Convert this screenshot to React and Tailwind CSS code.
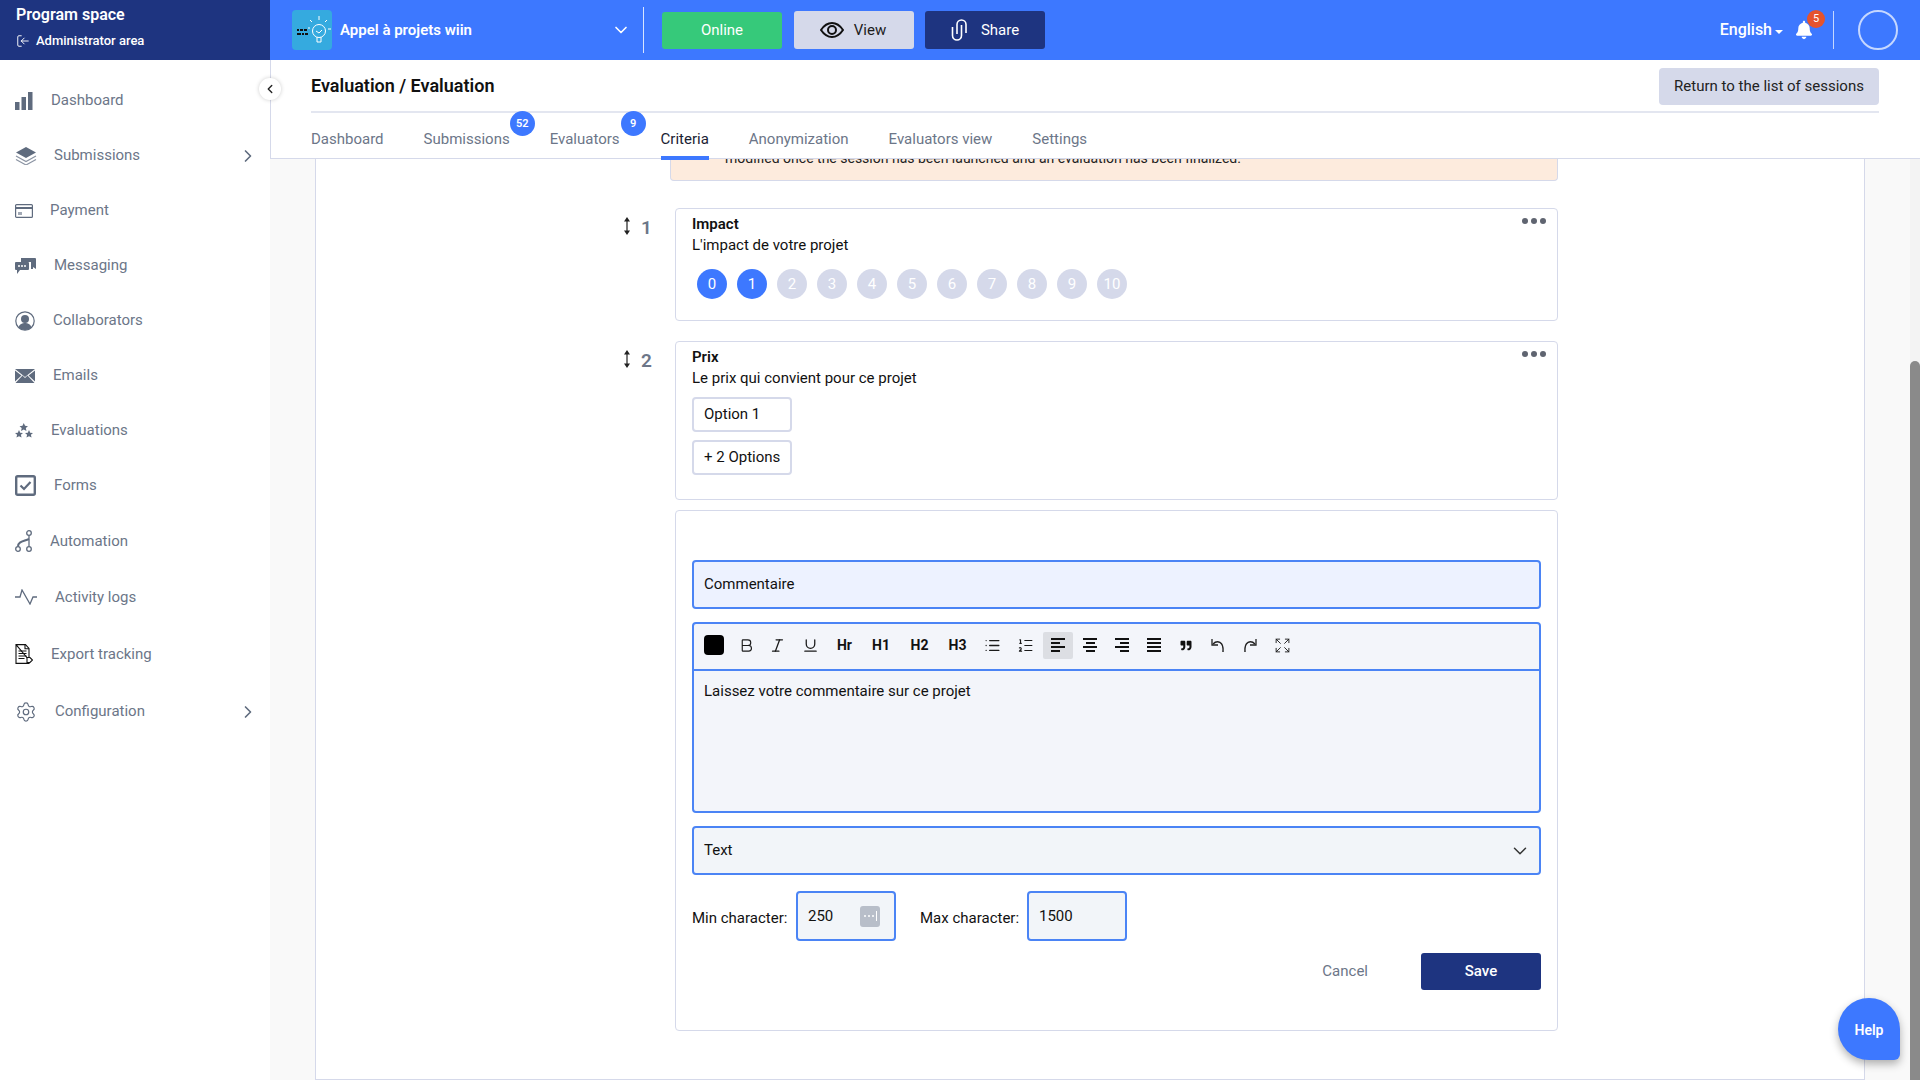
import React from 'react';
import {
  Bold, ChevronDown, ChevronLeft, ChevronRight, Expand, Italic, List, ListOrdered,
  LogIn, Settings, Underline,
} from 'lucide-react';
import { FaBell, FaQuoteRight } from 'react-icons/fa';

function DashIcon() {
  return (
    <svg width="18" height="18" viewBox="0 0 18 18" fill="#5f6b7e">
      <rect x="0" y="10" width="4.5" height="8" />
      <rect x="6.5" y="5" width="4.5" height="13" />
      <rect x="13" y="0" width="4.5" height="18" />
    </svg>
  );
}
function LayersIcon() {
  return (
    <svg width="22" height="18" viewBox="0 0 22 18" fill="none">
      <path d="M11 0 21 5.5 11 11 1 5.5Z" fill="#5f6b7e" />
      <path d="M1 9l10 5.5L21 9M1 12.5 11 18l10-5.5" stroke="#8b94a3" strokeWidth="1.2" />
    </svg>
  );
}
function CardIcon() {
  return (
    <svg width="18" height="14" viewBox="0 0 18 14" fill="none">
      <rect x="0.6" y="0.6" width="16.8" height="12.8" rx="1" stroke="#5f6b7e" strokeWidth="1.2" />
      <rect x="1" y="3" width="16" height="2" fill="#5f6b7e" />
      <rect x="3" y="8" width="4" height="3" fill="#a2a9b5" />
    </svg>
  );
}
function ChatIcon() {
  return (
    <svg width="21" height="16" viewBox="0 0 21 16" fill="#5f6b7e">
      <path d="M6 0h14a1 1 0 0 1 1 1v10l-3-2V11H16V4H6Z" />
      <path d="M1 4h12a1 1 0 0 1 1 1v6a1 1 0 0 1-1 1H5l-3 4v-4H1a1 1 0 0 1-1-1V5a1 1 0 0 1 1-1Z" />
      <circle cx="4" cy="8" r="1" fill="#fff" />
      <circle cx="7" cy="8" r="1" fill="#fff" />
      <circle cx="10" cy="8" r="1" fill="#fff" />
    </svg>
  );
}
function PersonIcon() {
  return (
    <svg width="20" height="20" viewBox="0 0 20 20" fill="none">
      <circle cx="10" cy="10" r="9.2" stroke="#5f6b7e" strokeWidth="1.2" />
      <circle cx="10" cy="8" r="4" fill="#5f6b7e" />
      <path d="M3.5 16.5c1-3.5 4-4.5 6.500-4.500s5.500 1 6.500 4.500A9 9 0 0 1 10 19a9 9 0 0 1-6.500-2.500Z" fill="#5f6b7e" />
    </svg>
  );
}
function MailIcon() {
  return (
    <svg width="20" height="14" viewBox="0 0 20 14" fill="#5f6b7e">
      <path d="M0 0h20L10 8Z" />
      <path d="M0 1.500v11l6.500-6ZM20 1.500v11l-6.500-6Z" />
      <path d="M7.500 6.500 10 9l2.500-2.500L19.500 14H.5Z" />
    </svg>
  );
}
function StarsIcon() {
  const star = 'M5 0l1.500 3.300 3.500.4-2.600 2.300.8 3.500L5 7.700 1.800 9.500l.8-3.500L0 3.700l3.500-.4Z';
  return (
    <svg width="18" height="15" viewBox="0 0 18 15" fill="#5f6b7e">
      <path d={star} transform="translate(4.500 0) scale(.85)" />
      <path d={star} transform="translate(0 7) scale(.8)" />
      <path d={star} transform="translate(10 7) scale(.8)" />
    </svg>
  );
}
function CheckBoxIcon() {
  return (
    <svg width="21" height="21" viewBox="0 0 21 21" fill="none">
      <rect x="1.200" y="1.200" width="18.600" height="18.600" rx="1.500" stroke="#5f6b7e" strokeWidth="2.400" />
      <path d="M5.500 10.500l3.500 3.500 6.500-7" stroke="#5f6b7e" strokeWidth="2.200" />
    </svg>
  );
}
function FlowIcon() {
  return (
    <svg width="18" height="22" viewBox="0 0 18 22" fill="none" stroke="#5f6b7e" strokeWidth="1.300">
      <circle cx="14" cy="3" r="2.300" />
      <circle cx="3" cy="19" r="2.300" />
      <circle cx="14" cy="19" r="2.300" />
      <path d="M14 5.500v11" />
      <path d="M3 16.500c0-5 5-5 11-7.500" strokeWidth="2" />
    </svg>
  );
}
function PulseIcon() {
  return (
    <svg width="22" height="16" viewBox="0 0 22 16" fill="none" stroke="#5f6b7e" strokeWidth="1.300">
      <path d="M0 8h5l2-7 8 14 3-7h4" />
    </svg>
  );
}
function ExportIcon() {
  return (
    <svg width="18" height="20" viewBox="0 0 18 20" fill="none" stroke="#111" strokeWidth="1.100">
      <path d="M1 .6h9.500L14 4.500V13M14 16v3.400H1V.6Z" />
      <path d="M3.500 7h8M3.500 9.500h8M3.500 12h8M3.500 14.500h6" />
      <path d="M10 .8v4h4" />
      <path d="M12 13.500h3l2.500 2.500-2.500 2.500h-3Z" fill="#fff" />
    </svg>
  );
}
function UndoIcon({ flip }) {
  return (
    <svg className={flip ? '-scale-x-100' : ''} width="14" height="16" viewBox="0 0 14 16" fill="none" stroke="#222" strokeWidth="1.500">
      <path d="M2 7c4-4 11-3 10 8" />
      <path d="M1 2v6h6" strokeWidth="1.300" />
    </svg>
  );
}

const menu = [
  { label: 'Dashboard', icon: <DashIcon />, row: 'h-[55px]', slot: 'w-[36px]' },
  { label: 'Submissions', icon: <LayersIcon />, row: 'h-[55px]', slot: 'w-[39px]', more: true },
  { label: 'Payment', icon: <CardIcon />, row: 'h-[55px]', slot: 'w-[35px]' },
  { label: 'Messaging', icon: <ChatIcon />, row: 'h-[55px]', slot: 'w-[39px]' },
  { label: 'Collaborators', icon: <PersonIcon />, row: 'h-[55px]', slot: 'w-[38px]' },
  { label: 'Emails', icon: <MailIcon />, row: 'h-[55px]', slot: 'w-[38px]' },
  { label: 'Evaluations', icon: <StarsIcon />, row: 'h-[55px]', slot: 'w-[36px]' },
  { label: 'Forms', icon: <CheckBoxIcon />, row: 'h-[55px]', slot: 'w-[39px]' },
  { label: 'Automation', icon: <FlowIcon />, row: 'h-[56px]', slot: 'w-[35px]' },
  { label: 'Activity logs', icon: <PulseIcon />, row: 'h-[56px]', slot: 'w-[40px]' },
  { label: 'Export tracking', icon: <ExportIcon />, row: 'h-[58px]', slot: 'w-[36px]' },
  { label: 'Configuration', icon: <Settings className="h-[22px] w-[22px] text-[#5f6b7e]" strokeWidth={1.3} />, row: 'h-[57px]', slot: 'w-[40px]', more: true },
];

const tabs = [
  { label: 'Dashboard' },
  { label: 'Submissions', badge: '52' },
  { label: 'Evaluators', badge: '9', extra: 'pr-[1px]' },
  { label: 'Criteria', active: true },
  { label: 'Anonymization' },
  { label: 'Evaluators view' },
  { label: 'Settings' },
];

function Sidebar() {
  return (
    <aside className="w-[270px] shrink-0 bg-white pt-[13px]">
      {menu.map((m) => (
        <div key={m.label} className={`flex items-center pl-[15px] pr-[12px] text-[15px] text-[#6c7688] ${m.row}`}>
          <div className={`flex shrink-0 items-center ${m.slot}`}>{m.icon}</div>
          <span className="flex-1">{m.label}</span>
          {m.more && <ChevronRight className="h-[20px] w-[20px] text-[#5f6b7e]" strokeWidth={2} />}
        </div>
      ))}
    </aside>
  );
}

function Logo() {
  return (
    <div className="flex h-[40px] w-[40px] shrink-0 items-center justify-center rounded-[4px] bg-[#35aadf]">
      <svg width="38" height="32" viewBox="0 0 38 32" fill="none">
        <path d="M4 16h2M7 16h3M11 16h3M4 20h4M9 20h2M12 20h3" stroke="#111" strokeWidth="2" />
        <circle cx="26" cy="17" r="6.500" stroke="#fff" strokeWidth="1" />
        <path d="M24 23v5h4v-5M23 17l3 2 3-3M26 2v4M34 6l-2 2M38 15h-3M17 6l2 2M15 14h2" stroke="#fff" strokeWidth="1" />
      </svg>
    </div>
  );
}

function Header() {
  return (
    <header className="flex h-[60px] shrink-0 bg-[#3d78ff] text-white">
      <div className="w-[270px] shrink-0 bg-[#1e3480] pl-[16px] pt-[6px]">
        <div className="text-[16px] font-semibold leading-[18px]">Program space</div>
        <div className="mt-[8px] flex items-center gap-[6px] text-[13px] font-medium leading-[17px]">
          <LogIn className="h-[14px] w-[14px] rotate-180" strokeWidth={1.6} />
          Administrator area
        </div>
      </div>
      <div className="flex flex-1 items-center pl-[22px] pr-[22px]">
        <Logo />
        <span className="ml-[8px] w-[271px] text-[15px] font-semibold">Appel à projets wiin</span>
        <ChevronDown className="h-[20px] w-[20px]" strokeWidth={2} />
        <div className="ml-[12px] h-[46px] w-px bg-white/80" />
        <button className="ml-[18px] h-[37px] w-[120px] rounded-[3px] bg-[#36c97a] text-[15px]">Online</button>
        <button className="ml-[12px] flex h-[38px] w-[120px] items-center justify-center gap-[10px] rounded-[3px] bg-[#d5d9ea] pr-[2px] text-[15px] text-[#1c1c1c]">
          <svg width="24" height="16" viewBox="0 0 24 16" fill="none" stroke="#111" strokeWidth="2">
            <path d="M1 8c3-4.500 7-7 11-7s8 2.500 11 7c-3 4.500-7 7-11 7S4 12.500 1 8Z" />
            <circle cx="12" cy="8" r="4" />
          </svg>
          View
        </button>
        <button className="ml-[11px] flex h-[38px] w-[120px] items-center justify-center gap-[12px] rounded-[3px] bg-[#1e3480] text-[15px]">
          <svg width="18" height="22" viewBox="0 0 18 22" fill="none" stroke="#fff" strokeWidth="1.600">
            <path d="M1.500 8v8.500a4.500 4.500 0 0 0 9 0V6" />
            <path d="M6 15V5.500a4.500 4.500 0 0 1 9 0V14" />
          </svg>
          Share
        </button>
        <div className="ml-auto flex items-center text-[16px] font-medium">
          English
          <span className="ml-[3px] mt-[3px] h-0 w-0 border-x-[4px] border-t-[4px] border-x-transparent border-t-white" />
          <div className="relative ml-[13px] flex h-[24px] w-[16px] items-center justify-center">
            <FaBell className="h-[20px] w-[16px]" />
            <span className="absolute -right-[13px] -top-[8px] flex h-[18px] w-[18px] items-center justify-center rounded-full bg-[#e5532d] text-[11px] font-normal">5</span>
          </div>
          <div className="ml-[21px] h-[38px] w-px bg-white/70" />
          <div className="ml-[24px] h-[40px] w-[40px] rounded-full border-2 border-white/70" />
        </div>
      </div>
    </header>
  );
}

function SubHeader() {
  return (
    <div className="relative z-10 h-[99px] shrink-0 border-b border-l border-[#d5d9ea] bg-white pl-[40px] pr-[41px]">
      <div className="flex h-[53px] items-center justify-between border-b-2 border-[#e3e6f0]">
        <h1 className="text-[18px] font-semibold text-[#111]">Evaluation / Evaluation</h1>
        <button className="mt-[1px] h-[37px] w-[220px] rounded-[4px] bg-[#d5d9ea] text-[15px] text-[#222]">Return to the list of sessions</button>
      </div>
      <nav className="flex gap-[40px] pt-[14px] text-[15px] text-[#6c7688]">
        {tabs.map((t) => (
          <div key={t.label} className={`relative h-[33px] leading-[24px] ${t.extra || ''} ${t.active ? 'border-b-4 border-[#3d78ff] text-[#1a2233]' : ''}`}>
            {t.label}
            {t.badge && (
              <span className="absolute -right-[25px] -top-[16px] flex h-[25px] w-[25px] items-center justify-center rounded-full bg-[#3d78ff] text-[11px] font-semibold text-white">
                {t.badge}
              </span>
            )}
          </div>
        ))}
      </nav>
    </div>
  );
}

function DragNumber({ n }) {
  return (
    <div className="flex w-[54px] shrink-0 items-start pl-[1px]">
      <svg className="mt-[9px]" width="10" height="18" viewBox="0 0 10 18" fill="#222">
        <path d="M5 0l3 4.500H5.600v9H8L5 18l-3-4.500h2.400v-9H2Z" />
      </svg>
      <span className="ml-[9px] mt-[8px] text-[19px] font-semibold leading-[24px] text-[#6c7688]">{n}</span>
    </div>
  );
}

// alignment icon in the toolbar
function Lines({ align, active, full }) {
  const short = full ? 'w-[14px]' : 'w-[9px]';
  return (
    <span className={`flex h-[27px] w-[30px] flex-col justify-center gap-[2px] rounded-[2px] ${align} ${active ? 'bg-[#dcdee3]' : ''}`}>
      <span className="h-[2px] w-[14px] bg-[#111]" />
      <span className={`h-[2px] bg-[#111] ${short}`} />
      <span className="h-[2px] w-[14px] bg-[#111]" />
      <span className={`h-[2px] bg-[#111] ${short}`} />
    </span>
  );
}

function Editor() {
  const cell = 'flex h-[27px] shrink-0 items-center justify-center';
  const txt = 'text-[14px] font-bold text-[#111]';
  const ic = 'h-[17px] w-[17px] text-[#1a1a1a]';
  return (
    <div className="mt-[13px] h-[191px] rounded-[4px] border-2 border-[#4b84f5] bg-[#f3f5fa]">
      <div className="flex h-[47px] items-center border-b-2 border-[#4b84f5] pb-[3px] pl-[10px]">
        <span className="h-[20px] w-[20px] shrink-0 rounded-[4px] bg-black" />
        <div className={`${cell} ml-[7px] w-[30px]`}><Bold className={ic} strokeWidth={1.6} /></div>
        <div className={`${cell} w-[32px]`}><Italic className={ic} strokeWidth={1.8} /></div>
        <div className={`${cell} w-[34px]`}><Underline className={ic} strokeWidth={1.8} /></div>
        <div className={`${cell} w-[35px] ${txt}`}>Hr</div>
        <div className={`${cell} w-[38px] ${txt}`}>H1</div>
        <div className={`${cell} w-[39px] ${txt}`}>H2</div>
        <div className={`${cell} w-[37px] ${txt}`}>H3</div>
        <div className={`${cell} w-[33px]`}><List className={ic} strokeWidth={1.8} /></div>
        <div className={`${cell} w-[32px]`}><ListOrdered className={ic} strokeWidth={1.6} /></div>
        <div className={`${cell} ml-[1px] w-[32px]`}><Lines align="items-start pl-[8px]" active /></div>
        <div className={`${cell} w-[32px]`}><Lines align="items-center" /></div>
        <div className={`${cell} w-[32px]`}><Lines align="items-end pr-[8px]" /></div>
        <div className={`${cell} w-[32px]`}><Lines align="items-center" full /></div>
        <div className={`${cell} w-[32px]`}><FaQuoteRight className="h-[11px] w-[12px] text-[#111]" /></div>
        <div className={`${cell} w-[32px]`}><UndoIcon /></div>
        <div className={`${cell} w-[32px]`}><UndoIcon flip /></div>
        <div className={`${cell} w-[32px]`}><Expand className={ic} strokeWidth={1.3} /></div>
      </div>
      <div className="px-[10px] pt-[10px] text-[15px] leading-[20px] text-[#111]">Laissez votre commentaire sur ce projet</div>
    </div>
  );
}

function CriteriaForm() {
  return (
    <div className="ml-[54px] mt-[10px] h-[521px] rounded-[4px] border border-[#d5d9ea] px-[16px] pt-[49px] text-[#111]">
      <div className="flex h-[49px] items-center rounded-[4px] border-2 border-[#4b84f5] bg-[#edf2ff] px-[10px] text-[15px]">Commentaire</div>
      <Editor />
      <div className="mt-[13px] flex h-[49px] items-center justify-between rounded-[4px] border-2 border-[#4b84f5] bg-[#f2f5f9] pl-[10px] pr-[8px] text-[15px]">
        Text
        <ChevronDown className="h-[22px] w-[22px] text-[#333]" strokeWidth={1.6} />
      </div>
      <div className="mt-[16px] flex items-center text-[15px]">
        <span className="mt-[4px] w-[104px]">Min character:</span>
        <div className="flex h-[50px] w-[100px] items-center justify-between rounded-[4px] border-2 border-[#4b84f5] bg-[#f2f5f9] pl-[10px] pr-[14px]">
          250
          <span className="flex h-[21px] w-[20px] items-center justify-center gap-[2px] rounded-[3px] bg-[#b8bec9]">
            <i className="h-[2px] w-[2px] rounded-full bg-white" />
            <i className="h-[2px] w-[2px] rounded-full bg-white" />
            <i className="h-[2px] w-[2px] rounded-full bg-white" />
            <i className="h-[10px] w-px bg-white" />
          </span>
        </div>
        <span className="ml-[24px] mt-[4px] w-[107px]">Max character:</span>
        <div className="flex h-[50px] w-[100px] items-center rounded-[4px] border-2 border-[#4b84f5] bg-[#f2f5f9] pl-[10px]">1500</div>
      </div>
      <div className="mt-[12px] flex items-center justify-end">
        <button className="mr-[53px] text-[15px] text-[#6c7688]">Cancel</button>
        <button className="h-[37px] w-[120px] rounded-[3px] bg-[#1e3480] text-[15px] font-medium text-white">Save</button>
      </div>
    </div>
  );
}

function Dots() {
  return (
    <div className="absolute right-[11px] top-[9px] flex gap-[3px]">
      <i className="h-[6px] w-[6px] rounded-full bg-[#5f6470]" />
      <i className="h-[6px] w-[6px] rounded-full bg-[#5f6470]" />
      <i className="h-[6px] w-[6px] rounded-full bg-[#5f6470]" />
    </div>
  );
}

function Content() {
  return (
    <div className="relative flex min-h-0 flex-1 overflow-hidden bg-[#f9f9f9] pl-[45px]">
      <div className="w-[1550px] shrink-0 overflow-hidden border-x border-b border-[#d5d9ea] bg-white">
        <div className="ml-[305px] w-[937px] text-[15px]">
          <div className="ml-[49px] h-[22px] overflow-hidden rounded-b-[4px] border border-t-0 border-[#d5d9ea] bg-[#fdebdd] pl-[54px] text-[14px] leading-[20px] text-[#222]">
            <div className="-mt-[11px]">modified once the session has been launched and an evaluation has been finalized.</div>
          </div>
          <div className="mt-[27px] flex">
            <DragNumber n="1" />
            <div className="relative h-[113px] flex-1 rounded-[4px] border border-[#d5d9ea] px-[16px] pt-[5px] text-[#111]">
              <div className="font-semibold leading-[20px]">Impact</div>
              <div className="mt-[1px] leading-[21px]">L'impact de votre projet</div>
              <div className="mt-[13px] flex gap-[10px] pl-[5px]">
                {[0, 1, 2, 3, 4, 5, 6, 7, 8, 9, 10].map((n) => (
                  <span key={n} className={`flex h-[30px] w-[30px] items-center justify-center rounded-full text-[15px] text-white ${n < 2 ? 'bg-[#3d78ff]' : 'bg-[#d5d9ea]'}`}>{n}</span>
                ))}
              </div>
              <Dots />
            </div>
          </div>
          <div className="mt-[20px] flex">
            <DragNumber n="2" />
            <div className="relative h-[159px] flex-1 rounded-[4px] border border-[#d5d9ea] px-[16px] pt-[5px] text-[#111]">
              <div className="font-semibold leading-[20px]">Prix</div>
              <div className="mt-[1px] leading-[21px]">Le prix qui convient pour ce projet</div>
              <div className="mt-[8px] flex h-[35px] w-[100px] items-center rounded-[4px] border-2 border-[#d5d9ea] pl-[10px]">Option 1</div>
              <div className="mt-[8px] flex h-[35px] w-[100px] items-center rounded-[4px] border-2 border-[#d5d9ea] pl-[10px]">+ 2 Options</div>
              <Dots />
            </div>
          </div>
          <CriteriaForm />
        </div>
      </div>
      <div className="ml-[45px] w-[10px] shrink-0 bg-[#f3f3f3] pt-[202px]">
        <div className="h-full rounded-t-[5px] bg-[#8a8a8a]" />
      </div>
      <button className="absolute bottom-[20px] right-[20px] h-[62px] w-[62px] rounded-[31px] rounded-br-[6px] bg-[#3d78ff] pt-[2px] text-[14px] font-semibold text-white shadow-[0_4px_8px_rgba(0,0,0,0.3)]">Help</button>
    </div>
  );
}

export default function App() {
  return (
    <div className="flex h-screen w-screen flex-col overflow-hidden bg-white font-[family-name:Roboto,sans-serif]">
      <Header />
      <div className="relative flex min-h-0 flex-1">
        <Sidebar />
        <main className="flex min-w-0 flex-1 flex-col">
          <SubHeader />
          <Content />
        </main>
        <button className="absolute left-[259px] top-[18px] z-20 flex h-[22px] w-[22px] items-center justify-center rounded-full bg-white shadow-[0_0_4px_rgba(0,0,0,0.2)]">
          <ChevronLeft className="h-[14px] w-[14px] text-[#222]" strokeWidth={2.4} />
        </button>
      </div>
    </div>
  );
}
